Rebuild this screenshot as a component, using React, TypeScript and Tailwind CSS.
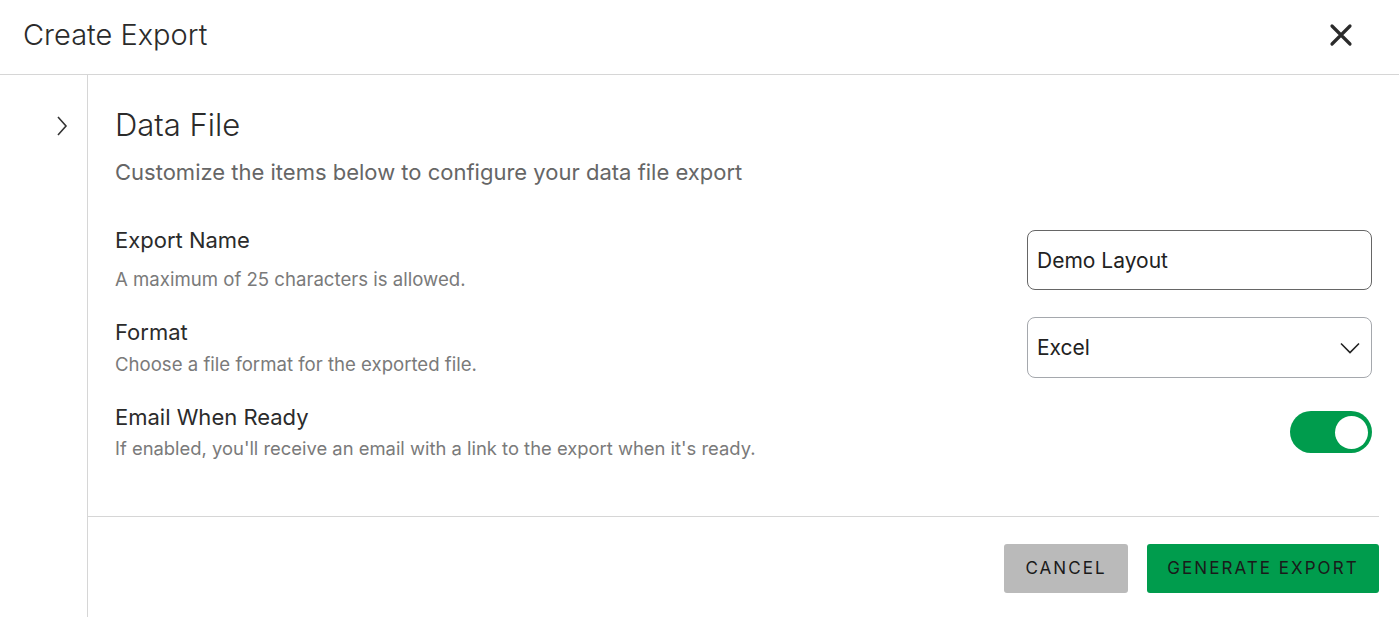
import React, { useState } from 'react';

const font = { fontFamily: 'Inter, "Noto Sans", sans-serif' };

const App: React.FC = () => {
  const [emailOn, setEmailOn] = useState(true);
  const [name, setName] = useState('Demo Layout');

  return (
    <div className="w-[1399px] h-[617px] bg-white text-[#333] overflow-hidden flex flex-col" style={font}>
      <header className="h-[75px] shrink-0 border-b border-[#d6d6d6] flex items-center justify-between pl-[23px] pr-[46px]">
        <h1 className="text-[29px] font-light text-[#2b2b2b] leading-none pb-[6px]">Create Export</h1>
        <button className="w-[24px] h-[24px] -mt-[5px] flex items-center justify-center text-[#2b2b2b]">
          <svg width="24" height="24" viewBox="0 0 24 24" fill="none" stroke="currentColor" strokeWidth="3.2" strokeLinecap="round">
            <path d="M3 3l18 18M21 3L3 21" />
          </svg>
        </button>
      </header>

      <div className="flex flex-1 min-h-0">
        <aside className="w-[88px] shrink-0 border-r border-[#d6d6d6] flex justify-end pr-[18px] pt-[40px]">
          <svg width="14" height="22" viewBox="0 0 14 22" fill="none" stroke="#333" strokeWidth="1.6">
            <path d="M3 2l8 9-8 9" />
          </svg>
        </aside>

        <main className="flex-1 flex flex-col">
          <div className="pl-[27px] pr-[27px] pt-[31px] h-[441px] shrink-0">
            <h2 className="text-[31px] font-light text-[#2b2b2b] leading-[38px]">Data File</h2>
            <p className="mt-[14px] text-[22px] text-[#666] leading-[28px]">
              Customize the items below to configure your data file export
            </p>

            <div className="mt-[37px] flex items-start justify-between">
              <div className="pt-[3px]">
                <div className="text-[22px] text-[#2b2b2b] leading-[28px]">Export Name</div>
                <div className="mt-[13px] text-[18.6px] text-[#7a7a7a] leading-[24px]">A maximum of 25 characters is allowed.</div>
              </div>
              <input
                value={name}
                onChange={(e) => setName(e.target.value)}
                className="mt-[7px] w-[345px] h-[60px] rounded-[8px] border border-[#666] px-[9px] text-[21px] text-[#222] outline-none"
                style={font}
              />
            </div>

            <div className="mt-[27px] flex items-start justify-between">
              <div>
                <div className="text-[22px] text-[#2b2b2b] leading-[28px]">Format</div>
                <div className="mt-[6px] text-[18.6px] text-[#7a7a7a] leading-[24px]">Choose a file format for the exported file.</div>
              </div>
              <div className="-mt-[1px] w-[345px] h-[61px] rounded-[8px] border border-[#a5a8ad] pl-[9px] pr-[11px] flex items-center justify-between text-[21px] text-[#222]">
                <span>Excel</span>
                <svg width="20" height="12" viewBox="0 0 20 12" fill="none" stroke="#222" strokeWidth="1.6">
                  <path d="M1 1.5l9 9 9-9" />
                </svg>
              </div>
            </div>

            <div className="mt-[25px] flex items-start justify-between">
              <div>
                <div className="text-[22px] text-[#2b2b2b] leading-[28px]">Email When Ready</div>
                <div className="mt-[5px] text-[18.4px] text-[#7a7a7a] leading-[24px]">
                  If enabled, you'll receive an email with a link to the export when it's ready.
                </div>
              </div>
              <button
                onClick={() => setEmailOn(!emailOn)}
                className={`mt-[8px] w-[82px] h-[42px] rounded-full p-[4px] flex items-center ${emailOn ? 'bg-[#009c4d] justify-end' : 'bg-[#bababa] justify-start'}`}
              >
                <span className="w-[33px] h-[33px] rounded-full bg-white block" />
              </button>
            </div>
          </div>

          <div className="border-t border-[#d6d6d6] mr-[20px]" />

          <div className="flex justify-end gap-[19px] pr-[20px] pt-[27px]">
            <button className="w-[124px] h-[49px] rounded-[3px] bg-[#bababa] text-[17px] tracking-[0.12em] text-[#1a1a1a]">
              CANCEL
            </button>
            <button className="w-[232px] h-[49px] rounded-[3px] bg-[#009c4d] text-[17px] tracking-[0.12em] text-[#1a1a1a]">
              GENERATE EXPORT
            </button>
          </div>
        </main>
      </div>
    </div>
  );
};

export default App;
